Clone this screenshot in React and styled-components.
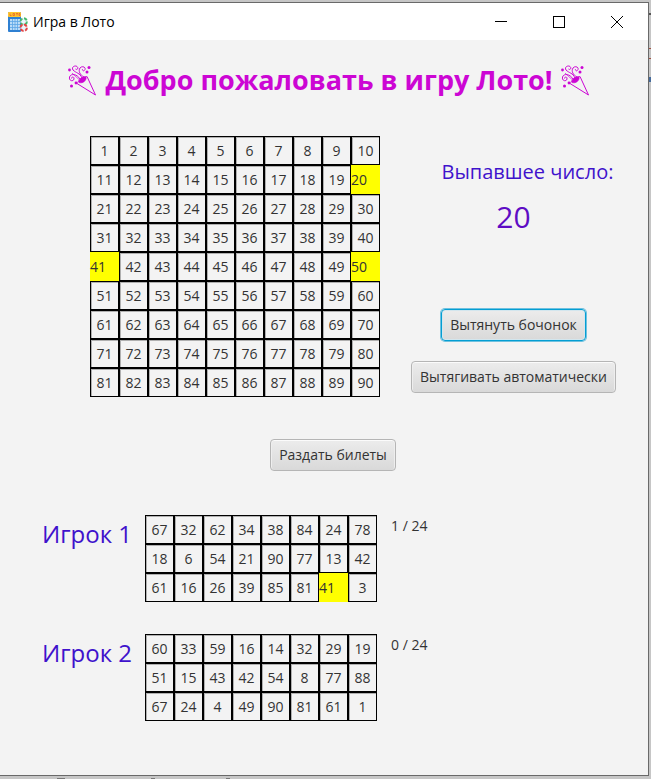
import React from "react";
import styled, { createGlobalStyle, css } from "styled-components";

const GlobalStyle = createGlobalStyle`
  *, *::before, *::after { box-sizing: border-box; }
  body {
    margin: 0;
    font-family: "Open Sans", "Noto Sans", sans-serif;
    font-size: 14px;
    color: #333333;
  }
`;

const Desktop = styled.div`
  display: flex;
  min-height: 100vh;
  padding: 2px 2px 3px 0;
  background:
    linear-gradient(#777, #777) 57px 100% / 8px 1px no-repeat,
    linear-gradient(#777, #777) 151px 100% / 4px 1px no-repeat,
    linear-gradient(#777, #777) 226px 100% / 4px 1px no-repeat,
    linear-gradient(#555, #555) 100% 13px / 2px 2px no-repeat,
    linear-gradient(#a05040, #a05040) 100% 48px / 2px 1px no-repeat,
    linear-gradient(#a05040, #a05040) 100% 58px / 2px 1px no-repeat,
    linear-gradient(#456a9a, #456a9a) 100% 77px / 2px 5px no-repeat,
    #c6c6c6;
`;

const Window = styled.div`
  flex: 1;
  display: flex;
  flex-direction: column;
  background: #f3f3f3;
  border: solid #696969;
  border-width: 1px 1px 1px 0;
`;

const TitleBar = styled.header`
  display: flex;
  align-items: center;
  height: 37px;
  padding: 0 2px 0 8px;
  background: #ffffff;
`;

const WindowTitle = styled.span`
  flex: 1;
  margin-left: 5px;
  font-size: 14px;
  line-height: 20px;
  color: #000000;
`;

const WindowButton = styled.button`
  display: flex;
  align-items: center;
  justify-content: center;
  width: 58px;
  height: 37px;
  padding: 0;
  border: 0;
  background: transparent;
`;

const Content = styled.main`
  display: flex;
  flex-direction: column;
  padding-top: 20px;
`;

const Heading = styled.h1`
  display: flex;
  align-items: center;
  justify-content: center;
  gap: 8px;
  margin: 0 0 36px;
  padding-left: 10px;
  font-size: 27px;
  line-height: 40px;
  font-weight: 700;
  white-space: nowrap;
  color: #cc06d4;
`;

const GameRow = styled.section`
  display: flex;
  gap: 31px;
  padding-left: 90px;
`;

const Grid = styled.table`
  flex: none;
  border-collapse: separate;
  border-spacing: 0;
`;

const Cell = styled.td`
  width: 29px;
  min-width: 29px;
  height: 29px;
  padding: 0;
  border: 1px solid #000000;
  box-shadow: inset 1px 1px 0 #b0b0b0;
  text-align: center;
  line-height: 20px;
  ${({ $drawn }) =>
    $drawn &&
    css`
      background: #ffff00;
      border-color: #ffff00;
      border-left-width: 0;
      box-shadow: none;
      text-align: left;
    `}
`;

const Controls = styled.div`
  display: flex;
  flex-direction: column;
  align-items: center;
  padding-top: 20px;
`;

const DrawLabel = styled.h2`
  margin: 0 0 0 28px;
  font-size: 20px;
  line-height: 32px;
  font-weight: 400;
  white-space: nowrap;
  color: #3f12cc;
`;

const DrawnNumber = styled.output`
  margin: 8px 0 71px;
  font-size: 30px;
  line-height: 42px;
  color: #5e0cc4;
`;

const Button = styled.button`
  height: 32px;
  padding: 0 8px;
  border: 1px solid #b5b5b5;
  border-radius: 4px;
  background: linear-gradient(#ececec, #d9d9d9);
  box-shadow: inset 0 1px 0 #fbfbfb, inset 1px 0 0 #eeeeee, inset -1px 0 0 #eeeeee;
  font: inherit;
  line-height: 20px;
  white-space: nowrap;
  color: #333333;
  ${({ $active }) =>
    $active &&
    css`
      border-color: #039ed3;
      box-shadow: inset 0 0 0 1px #d3e6ee, 0 0 0 1px #6fc1df;
    `}
`;

const ButtonStack = styled.div`
  display: flex;
  flex-direction: column;
  align-items: center;
  gap: 20px;
`;

const DealRow = styled.div`
  display: flex;
  justify-content: center;
  margin: 42px 0 44px;
  padding-left: 18px;
`;

const Players = styled.div`
  display: flex;
  flex-direction: column;
  gap: 32px;
`;

const PlayerRow = styled.section`
  display: flex;
  padding-left: 42px;
`;

const PlayerName = styled.h2`
  width: 103px;
  margin: 0;
  font-size: 24px;
  line-height: 38px;
  font-weight: 400;
  white-space: nowrap;
  color: #3f12cc;
`;

const Score = styled.span`
  margin-left: 14px;
  line-height: 22px;
`;

const board = Array.from({ length: 9 }, (_, r) =>
  Array.from({ length: 10 }, (_, c) => r * 10 + c + 1)
);

const drawn = [20, 41, 50];

const players = [
  {
    name: "Игрок 1",
    score: "1 / 24",
    ticket: [
      [67, 32, 62, 34, 38, 84, 24, 78],
      [18, 6, 54, 21, 90, 77, 13, 42],
      [61, 16, 26, 39, 85, 81, 41, 3],
    ],
  },
  {
    name: "Игрок 2",
    score: "0 / 24",
    ticket: [
      [60, 33, 59, 16, 14, 32, 29, 19],
      [51, 15, 43, 42, 54, 8, 77, 88],
      [67, 24, 4, 49, 90, 81, 61, 1],
    ],
  },
];

function NumberGrid({ rows, label }) {
  return (
    <Grid aria-label={label}>
      <tbody>
        {rows.map((row, i) => (
          <tr key={i}>
            {row.map((n) => (
              <Cell key={n} $drawn={drawn.includes(n)}>
                {n}
              </Cell>
            ))}
          </tr>
        ))}
      </tbody>
    </Grid>
  );
}

function LottoIcon() {
  return (
    <svg width="20" height="20" viewBox="0 0 20 20" aria-hidden="true">
      <rect width="13" height="20" rx="1" fill="#2f80d2" />
      <rect x="0" y="0" width="13" height="5" rx="1" fill="#ffc52e" />
      <path d="M2 1.5v2h1.5M5 1.5h1.5v2H5zM8 1.5h2M9 1.5v2M11 1.5h1v2h-1z" fill="none" stroke="#e6662b" strokeWidth="0.8" />
      <rect x="2" y="7" width="10" height="11" fill="#b9dcf8" />
      <path d="M4.5 7v11M7 7v11M9.5 7v11M2 9.5h10M2 12.5h10M2 15.5h10" stroke="#5ca6e6" strokeWidth="0.8" />
      <circle cx="15.7" cy="9.5" r="3.2" fill="#eaf5fb" stroke="#45b96c" strokeWidth="2" strokeDasharray="3.4 1.6" />
      <circle cx="15.7" cy="15.7" r="3.2" fill="#eaf5fb" stroke="#e34646" strokeWidth="2" strokeDasharray="3.4 1.6" />
    </svg>
  );
}

function PartyPopper() {
  return (
    <svg width="29" height="32" viewBox="0 0 29 32" fill="none" stroke="#cc06d4" aria-hidden="true">
      <path d="M9 19.5 27.5 31 19 12.5" strokeWidth="1" />
      <path d="M9 19.5c1-1 2-4 4-5s4-2 6-2" strokeWidth="0.8" />
      <path d="M11 18.5c-1-3 4-6.5 7-5.5 1 3-3 7-7 5.5z" fill="#cc06d4" strokeWidth="0.6" />
      <path d="M14 14C12 9 8 9 5 6c-2-3 2-5 4-3.5s0 4-1.5 2.5" strokeWidth="1" />
      <path d="M16 13c-4-2-6-6-4-9 2-2.500 6-1 5 1.5s-3 1-2.500-.5" strokeWidth="1" />
      <path d="M12 15C9 10 3 9 1.500 13c-1 4 4 5 4.500 2s-3-2-2.500-.5" strokeWidth="1" />
      <path d="M11 15.5 4 9" strokeWidth="0.7" />
      <g fill="#cc06d4" stroke="none">
        <circle cx="1.5" cy="6" r="1.4" />
        <circle cx="21" cy="3.5" r="1.5" />
        <circle cx="19" cy="8" r="1.5" />
        <circle cx="8" cy="19" r="1.4" />
        <circle cx="3.5" cy="22" r="1.5" />
      </g>
    </svg>
  );
}

export default function App() {
  return (
    <>
      <GlobalStyle />
      <Desktop>
        <Window>
          <TitleBar>
            <LottoIcon />
            <WindowTitle>Игра в Лото</WindowTitle>
            <WindowButton type="button" aria-label="Свернуть">
              <svg width="12" height="12" viewBox="0 0 12 12" stroke="#000">
                <path d="M0 5.5h12" />
              </svg>
            </WindowButton>
            <WindowButton type="button" aria-label="Развернуть">
              <svg width="12" height="12" viewBox="0 0 12 12" fill="none" stroke="#000">
                <rect x="0.5" y="0.5" width="11" height="11" />
              </svg>
            </WindowButton>
            <WindowButton type="button" aria-label="Закрыть">
              <svg width="12" height="12" viewBox="0 0 12 12" stroke="#000">
                <path d="M0 0l12 12M12 0L0 12" />
              </svg>
            </WindowButton>
          </TitleBar>
          <Content>
            <Heading>
              <PartyPopper />
              Добро пожаловать в игру Лото!
              <PartyPopper />
            </Heading>
            <GameRow>
              <NumberGrid rows={board} label="Числа" />
              <Controls>
                <DrawLabel>Выпавшее число:</DrawLabel>
                <DrawnNumber>20</DrawnNumber>
                <ButtonStack>
                  <Button type="button" $active>
                    Вытянуть бочонок
                  </Button>
                  <Button type="button">Вытягивать автоматически</Button>
                </ButtonStack>
              </Controls>
            </GameRow>
            <DealRow>
              <Button type="button">Раздать билеты</Button>
            </DealRow>
            <Players>
              {players.map((p) => (
                <PlayerRow key={p.name}>
                  <PlayerName>{p.name}</PlayerName>
                  <NumberGrid rows={p.ticket} label={p.name} />
                  <Score>{p.score}</Score>
                </PlayerRow>
              ))}
            </Players>
          </Content>
        </Window>
      </Desktop>
    </>
  );
}
